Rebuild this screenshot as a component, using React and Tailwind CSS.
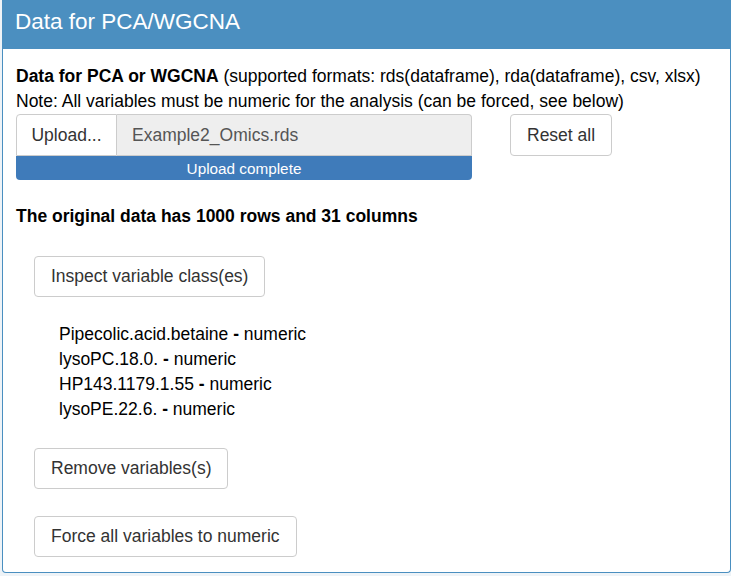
import React from 'react';

const vars = [
  ['Pipecolic.acid.betaine', 'numeric'],
  ['lysoPC.18.0.', 'numeric'],
  ['HP143.1179.1.55', 'numeric'],
  ['lysoPE.22.6.', 'numeric'],
];

function Btn({ children }) {
  return (
    <button className="rounded-[4px] border border-[#cccccc] bg-white px-[16px] py-[7px] text-[17.5px] leading-[25px] text-[#333333]">
      {children}
    </button>
  );
}

export default function App() {
  return (
    <div className="h-[576px] w-[731px] overflow-hidden bg-[#eef3f7] font-['Liberation_Sans',Arial,sans-serif] text-[17.5px] leading-[25px] text-black">
      <div className="ml-[2px] h-[573px] w-[729px] overflow-hidden rounded-b-[4px] border border-t-0 border-[#4a8fc0] bg-white">
        <div className="h-[49px] bg-[#4b8fc0] pl-[12px] pt-[8px] text-[22.5px] leading-[28px] text-white">
          Data for PCA/WGCNA
        </div>
        <div className="px-[13px] pt-[15px]">
          <p>
            <b>Data for PCA or WGCNA</b> (supported formats: rds(dataframe), rda(dataframe), csv, xlsx)
          </p>
          <p>Note: All variables must be numeric for the analysis (can be forced, see below)</p>

          <div className="flex items-start">
            <div className="w-[456px]">
              <div className="flex h-[42px]">
                <div className="flex w-[101px] items-center justify-center rounded-tl-[4px] border border-[#cccccc] bg-white text-[#333333]">
                  Upload...
                </div>
                <div className="flex flex-1 items-center rounded-tr-[4px] border border-l-0 border-[#cccccc] bg-[#eeeeee] pl-[15px] text-[#555555]">
                  Example2_Omics.rds
                </div>
              </div>
              <div className="flex h-[24px] items-center justify-center rounded-b-[4px] bg-[#3f7bba] text-[15.3px] text-white">
                Upload complete
              </div>
            </div>
            <div className="ml-[38px]">
              <button className="h-[42px] rounded-[4px] border border-[#cccccc] bg-white px-[16px] text-[17.5px] text-[#333333]">
                Reset all
              </button>
            </div>
          </div>

          <p className="mt-[24px] font-bold">The original data has 1000 rows and 31 columns</p>

          <div className="pl-[18px]">
            <div className="mt-[27px]">
              <Btn>Inspect variable class(es)</Btn>
            </div>
            <div className="mt-[25px] pl-[25px]">
              {vars.map(([n, t]) => (
                <div key={n}>
                  {n} <b>-</b> {t}
                </div>
              ))}
            </div>
            <div className="mt-[26px]">
              <Btn>Remove variables(s)</Btn>
            </div>
            <div className="mt-[27px]">
              <Btn>Force all variables to numeric</Btn>
            </div>
          </div>
        </div>
      </div>
    </div>
  );
}
